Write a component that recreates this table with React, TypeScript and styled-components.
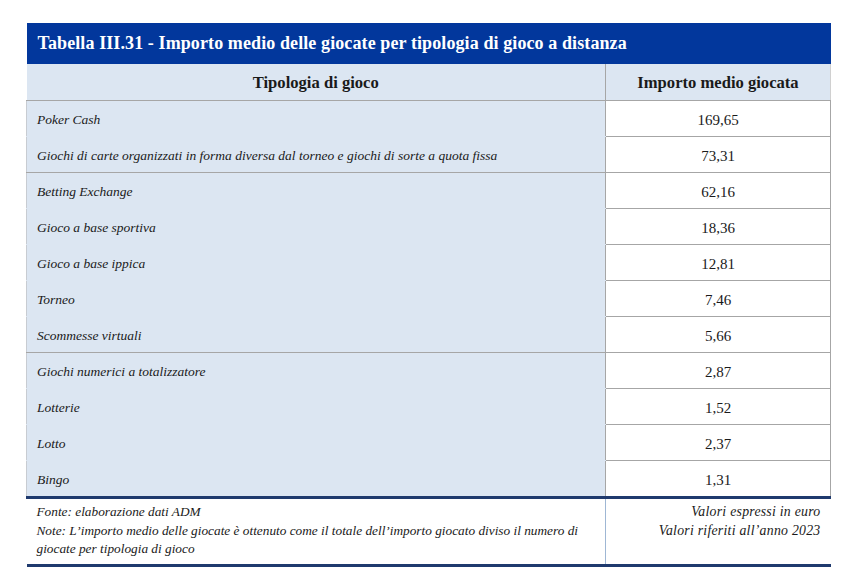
import React from 'react';
import styled, { createGlobalStyle } from 'styled-components';

const Global = createGlobalStyle`
  html, body { margin: 0; padding: 0; background: #fff; }
  body { font-family: "Liberation Serif", "DejaVu Serif", serif; color: #1a1a1a; }
`;

const Page = styled.div`
  padding: 23px 13px 0 26px;
`;

const Table = styled.table`
  width: 804px;
  border-collapse: collapse;
  table-layout: fixed;
  font-family: "Liberation Serif", "DejaVu Serif", serif;
  color: #1a1a1a;
`;

const TitleCell = styled.th`
  height: 41px;
  padding: 0 0 0 11px;
  background: #02379c;
  color: #fff;
  text-align: left;
  font-size: 18px;
  letter-spacing: 0.1px;
  font-weight: bold;
`;

const HeadCell = styled.th<{ $right?: boolean }>`
  height: 34px;
  padding: 2px 0 0;
  background: #dce6f2;
  border-bottom: 1px solid #a6a6a6;
  border-left: ${p => (p.$right ? '1px solid #a6a6a6' : 'none')};
  border-right: ${p => (p.$right ? '1px solid #d0d0d0' : 'none')};
  font-size: 16.6px;
  font-weight: bold;
  text-align: center;
`;

const NameCell = styled.td<{ $groupEnd?: boolean; $last?: boolean }>`
  height: 32px;
  padding: 3px 0 0 10px;
  background: #dce6f2;
  font-style: italic;
  font-size: 13.5px;
  border-left: 1px solid #c8ccd2;
  border-bottom: ${p =>
    p.$last ? '3px solid #1f3a6e' : p.$groupEnd ? '1px solid #a6a6a6' : '1px solid #dce6f2'};
`;

const ValueCell = styled.td<{ $last?: boolean }>`
  height: 32px;
  padding: 3px 0 0;
  background: #fff;
  text-align: center;
  font-size: 15px;
  border-left: 1px solid #a6a6a6;
  border-right: 1px solid #a6a6a6;
  border-bottom: ${p => (p.$last ? '3px solid #1f3a6e' : '1px solid #a6a6a6')};
`;

const FootCell = styled.td<{ $right?: boolean }>`
  height: 61px;
  vertical-align: top;
  padding: ${p => (p.$right ? '4px 10px 0 0' : '4px 0 0 10px')};
  text-align: ${p => (p.$right ? 'right' : 'left')};
  border-left: ${p => (p.$right ? '1px solid #9fb7d4' : 'none')};
  border-bottom: 3px solid #1f3a6e;
  font-style: italic;
  font-size: ${p => (p.$right ? '13.8px' : '13.3px')};
  letter-spacing: ${p => (p.$right ? '0.25px' : '0')};
  line-height: 18.5px;
`;

const rows: { name: string; value: string; groupEnd?: boolean }[] = [
  { name: 'Poker Cash', value: '169,65' },
  { name: 'Giochi di carte organizzati in forma diversa dal torneo e giochi di sorte a quota fissa', value: '73,31', groupEnd: true },
  { name: 'Betting Exchange', value: '62,16' },
  { name: 'Gioco a base sportiva', value: '18,36' },
  { name: 'Gioco a base ippica', value: '12,81' },
  { name: 'Torneo', value: '7,46' },
  { name: 'Scommesse virtuali', value: '5,66', groupEnd: true },
  { name: 'Giochi numerici a totalizzatore', value: '2,87' },
  { name: 'Lotterie', value: '1,52' },
  { name: 'Lotto', value: '2,37' },
  { name: 'Bingo', value: '1,31' },
];

export default function App() {
  return (
    <Page>
      <Global />
      <Table>
        <colgroup>
          <col style={{ width: 579 }} />
          <col style={{ width: 225 }} />
        </colgroup>
        <thead>
          <tr>
            <TitleCell colSpan={2}>
              Tabella III.31 - Importo medio delle giocate per tipologia di gioco a distanza
            </TitleCell>
          </tr>
          <tr>
            <HeadCell>Tipologia di gioco</HeadCell>
            <HeadCell $right>Importo medio giocata</HeadCell>
          </tr>
        </thead>
        <tbody>
          {rows.map((r, i) => {
            const last = i === rows.length - 1;
            return (
              <tr key={r.name}>
                <NameCell $groupEnd={r.groupEnd} $last={last}>{r.name}</NameCell>
                <ValueCell $last={last}>{r.value}</ValueCell>
              </tr>
            );
          })}
        </tbody>
        <tfoot>
          <tr>
            <FootCell>
              Fonte: elaborazione dati ADM
              <br />
              Note: L’importo medio delle giocate è ottenuto come il totale dell’importo giocato diviso il numero di
              giocate per tipologia di gioco
            </FootCell>
            <FootCell $right>
              Valori espressi in euro
              <br />
              Valori riferiti all’anno 2023
            </FootCell>
          </tr>
        </tfoot>
      </Table>
    </Page>
  );
}
